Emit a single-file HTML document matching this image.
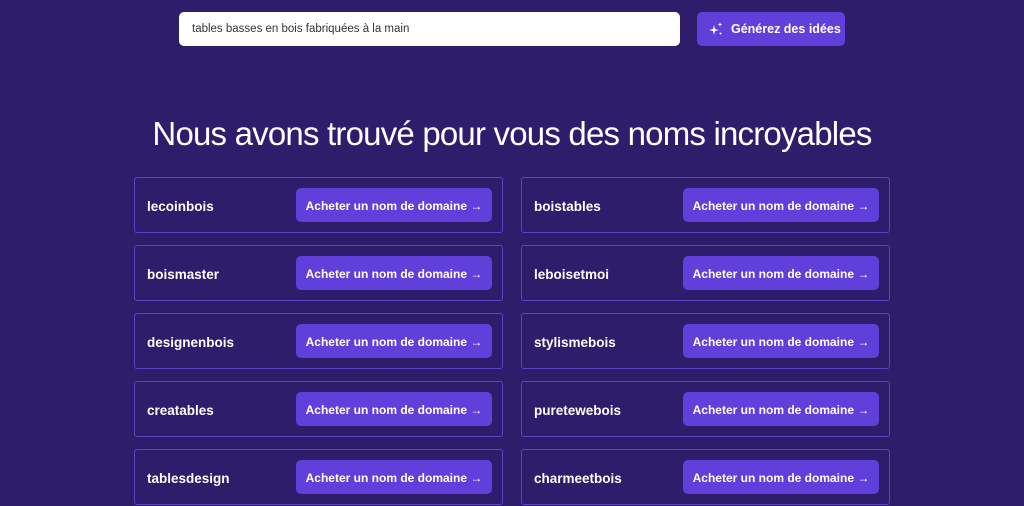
<!DOCTYPE html>
<html><head><meta charset="utf-8"><style>
body{margin:0;width:1024px;height:502px;overflow:hidden;background:#2d1d6b;font-family:"Liberation Sans",sans-serif;color:#fff;position:relative}
.in{position:absolute;left:179px;top:12px;width:501px;height:34px;background:#fff;border-radius:5px;color:#333;font-size:11.5px;line-height:34px;padding-left:13px;box-sizing:border-box}
.gen{position:absolute;left:697px;top:12px;width:148px;height:34px;background:#5f40da;border-radius:5px;font-size:12.5px;font-weight:bold;line-height:34px;box-sizing:border-box;padding-left:34px;white-space:nowrap}
.gen svg{position:absolute;left:12px;top:10px}
h1{position:absolute;top:115px;left:0;width:1024px;text-align:center;margin:0;font-weight:normal;font-size:33px;letter-spacing:-0.8px}
.c{position:absolute;width:369px;height:56px;border:1px solid #5a45c4;border-radius:3px;box-sizing:border-box}
.c span{position:absolute;left:12px;top:2px;line-height:54px;font-size:13.5px;font-weight:bold}
.c b{position:absolute;left:161px;top:10px;width:196px;height:34px;background:#5f40da;border-radius:5px;font-size:12px;line-height:36px;text-align:center;white-space:nowrap}
</style></head><body>
<div class="in">tables basses en bois fabriquées à la main</div>
<div class="gen"><svg width="14" height="14" viewBox="0 0 14 14" fill="#fff"><path d="M5 3 L6 7 L10 8 L6 9 L5 13 L4 9 L0 8 L4 7Z"/><path d="M11 0 L11.6 2 L13.5 2.5 L11.6 3 L11 5 L10.4 3 L8.5 2.5 L10.4 2Z"/><circle cx="11.5" cy="11.5" r="1"/></svg>Générez des idées</div>
<h1>Nous avons trouvé pour vous des noms incroyables</h1>
<div class="c" style="left:134px;top:177px"><span>lecoinbois</span><b>Acheter un nom de domaine →</b></div>
<div class="c" style="left:521px;top:177px"><span>boistables</span><b>Acheter un nom de domaine →</b></div>
<div class="c" style="left:134px;top:245px"><span>boismaster</span><b>Acheter un nom de domaine →</b></div>
<div class="c" style="left:521px;top:245px"><span>leboisetmoi</span><b>Acheter un nom de domaine →</b></div>
<div class="c" style="left:134px;top:313px"><span>designenbois</span><b>Acheter un nom de domaine →</b></div>
<div class="c" style="left:521px;top:313px"><span>stylismebois</span><b>Acheter un nom de domaine →</b></div>
<div class="c" style="left:134px;top:381px"><span>creatables</span><b>Acheter un nom de domaine →</b></div>
<div class="c" style="left:521px;top:381px"><span>puretewebois</span><b>Acheter un nom de domaine →</b></div>
<div class="c" style="left:134px;top:449px"><span>tablesdesign</span><b>Acheter un nom de domaine →</b></div>
<div class="c" style="left:521px;top:449px"><span>charmeetbois</span><b>Acheter un nom de domaine →</b></div>
</body></html>
